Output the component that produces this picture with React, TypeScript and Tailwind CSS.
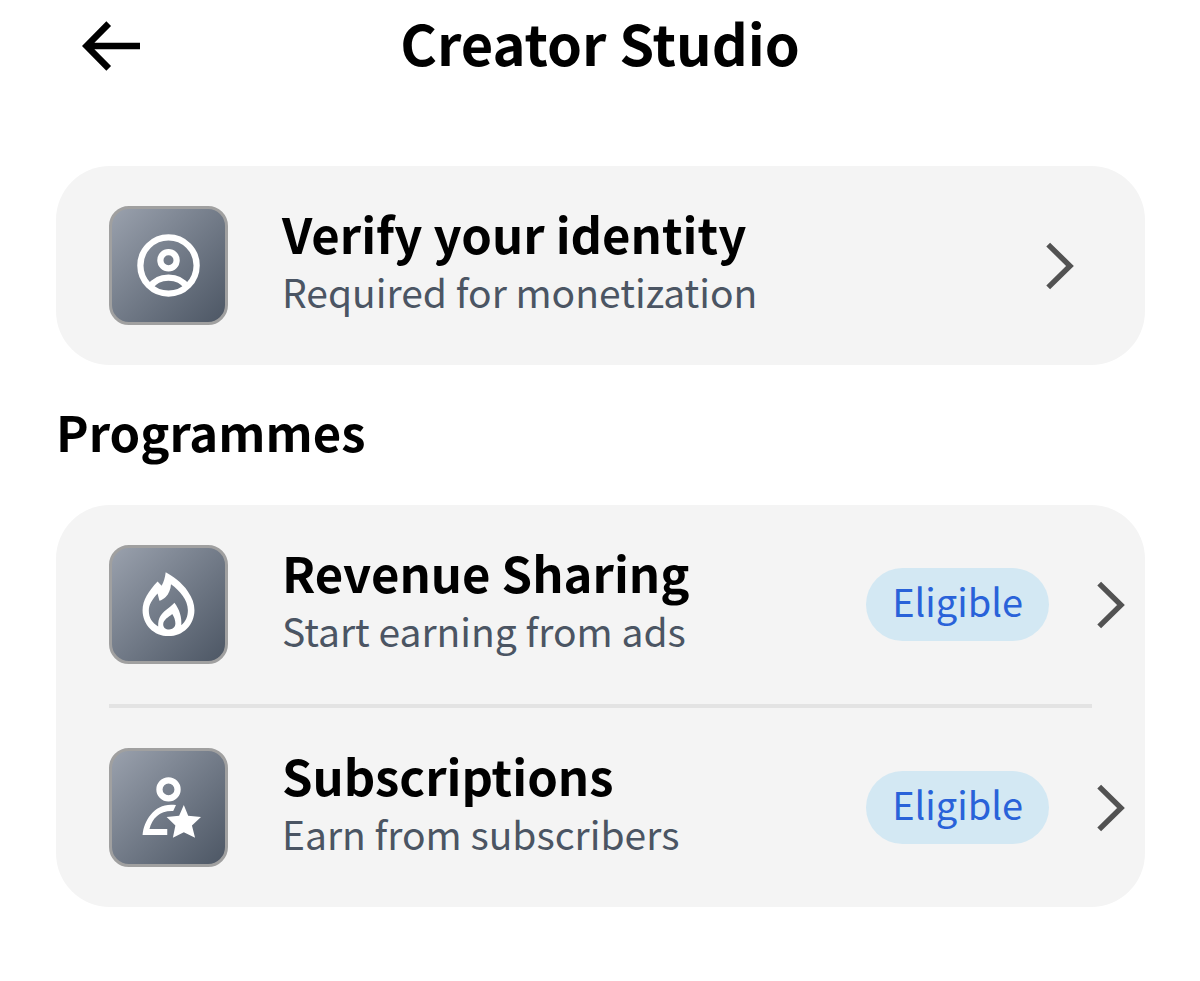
import type { ReactNode } from "react";

function BackArrow() {
  return (
    <svg viewBox="0 0 58 50" className="h-[50px] w-[58px]" fill="none" stroke="currentColor" strokeWidth="6.6" aria-hidden="true">
      <path d="M26.7 2.6 4.6 25l22.1 22.4M4.6 25H58" />
    </svg>
  );
}

function Chevron() {
  return (
    <svg viewBox="0 0 28 48" className="h-12 w-7 shrink-0 text-[#525252]" fill="none" stroke="currentColor" strokeWidth="5.4" aria-hidden="true">
      <path d="M2.2 2.6 24 24 2.2 45.4" />
    </svg>
  );
}

function AccountIcon() {
  return (
    <svg viewBox="0 0 24 24" className="size-[75px]" fill="none" stroke="currentColor" strokeWidth="2" aria-hidden="true">
      <circle cx="12" cy="12" r="9" />
      <circle cx="12" cy="10.3" r="2.6" />
      <path d="M6 19c1.3-2 3.5-3.1 6-3.1s4.7 1.1 6 3.1" />
    </svg>
  );
}

function FlameIcon() {
  return (
    <svg viewBox="0 0 24 24" className="size-[75px]" fill="currentColor" fillRule="evenodd" aria-hidden="true">
      <path d="M11.1 1.7C13.2 2.8 16.3 5 18.2 7.8 19.6 9.8 20.3 11.7 20.3 13.8 20.3 18.5 16.6 22.1 12 22.1S3.7 18.5 3.7 13.8C3.7 10.5 5.6 7.7 8.5 4.6L9.8 6C10.5 4.8 10.9 3.4 11.1 1.7ZM12.8 5.5C12.7 7.1 12.1 8.6 11.1 9.6 10.5 10.2 9.8 10.6 9.1 10.8L8.5 8.5C6.7 10.6 5.7 12 5.7 14 5.7 16.2 6.8 18 8.7 19 8.6 16.4 9.6 15 11.3 13.7 12.3 12.9 13.2 12.2 13.9 11.4 15.5 13.5 16.3 16 16.1 18.6 17.5 17.4 18.2 15.8 18.2 13.8 18.2 10.6 15.7 7.6 12.8 5.5ZM13.2 15C12 16 10.3 16.8 10.3 18.4 10.3 19.4 11.1 20 12.2 20S14.2 19.2 14.2 18.1C14.2 17 13.8 15.9 13.2 15Z" />
    </svg>
  );
}

function PersonStarIcon() {
  return (
    <svg viewBox="0 0 24 24" className="size-[75px]" fill="currentColor" aria-hidden="true">
      <circle cx="12" cy="6.2" r="2.9" fill="none" stroke="currentColor" strokeWidth="2" />
      <path d="M14.4 11.2C10.7 10.7 8.3 11.9 6.3 14.3 4.7 16.3 3.9 18.4 3.7 20.8H11.6V18.9H5.9C6.8 15.2 9.4 12.9 13.5 13.1Z" />
      <path d="M16.9 11.2 18.3 14.6 22.4 15 19.5 17.8 20.5 21.7 16.9 19.9 13.4 21.7 14.2 17.8 11.4 15 15.4 14.6Z" />
    </svg>
  );
}

function Row({ icon, title, text, status }: { icon: ReactNode; title: string; text: string; status?: string }) {
  return (
    <button type="button" className={`flex w-full items-center py-10 pl-[53px] text-left ${status ? "pr-5" : "pr-[71px]"}`}>
      <span className="flex size-[119px] shrink-0 items-center justify-center rounded-[20px] border-3 border-[#a0a0a0] bg-linear-to-br from-[#9ca3af] to-[#4b5563] bg-origin-border text-white">
        {icon}
      </span>
      <span className="ml-[54px] flex min-w-0 flex-1 flex-col">
        <span className="text-[49px] leading-[50px] font-bold text-black">{title}</span>
        <span className="text-[39px] leading-[66px] text-[#4b5563]">{text}</span>
      </span>
      {status && (
        <span className="mr-12 rounded-full bg-[#d3e8f3] px-[26px] pb-2 text-[38px] leading-[65px] text-[#2962d9]">{status}</span>
      )}
      <Chevron />
    </button>
  );
}

export default function App() {
  return (
    <div className="min-h-screen bg-white font-['Noto_Sans_CJK_JP','Open_Sans',sans-serif] text-black">
      <header className="grid h-[92px] grid-cols-[1fr_auto_1fr] items-center px-[82px]">
        <button type="button" aria-label="Back" className="justify-self-start">
          <BackArrow />
        </button>
        <h1 className="pb-2 text-[56px] leading-[72px] font-bold">Creator Studio</h1>
      </header>
      <main className="pt-[74px] pr-[55px] pb-16 pl-14">
        <section className="rounded-[54px] bg-[#f4f4f4]">
          <Row icon={<AccountIcon />} title="Verify your identity" text="Required for monetization" />
        </section>
        <h2 className="pt-9 pb-11 text-[49px] leading-[60px] font-bold">Programmes</h2>
        <section className="rounded-[54px] bg-[#f4f4f4]">
          <Row icon={<FlameIcon />} title="Revenue Sharing" text="Start earning from ads" status="Eligible" />
          <hr className="mx-[53px] border-0 border-t-4 border-[#e3e3e3]" />
          <Row icon={<PersonStarIcon />} title="Subscriptions" text="Earn from subscribers" status="Eligible" />
        </section>
      </main>
    </div>
  );
}
